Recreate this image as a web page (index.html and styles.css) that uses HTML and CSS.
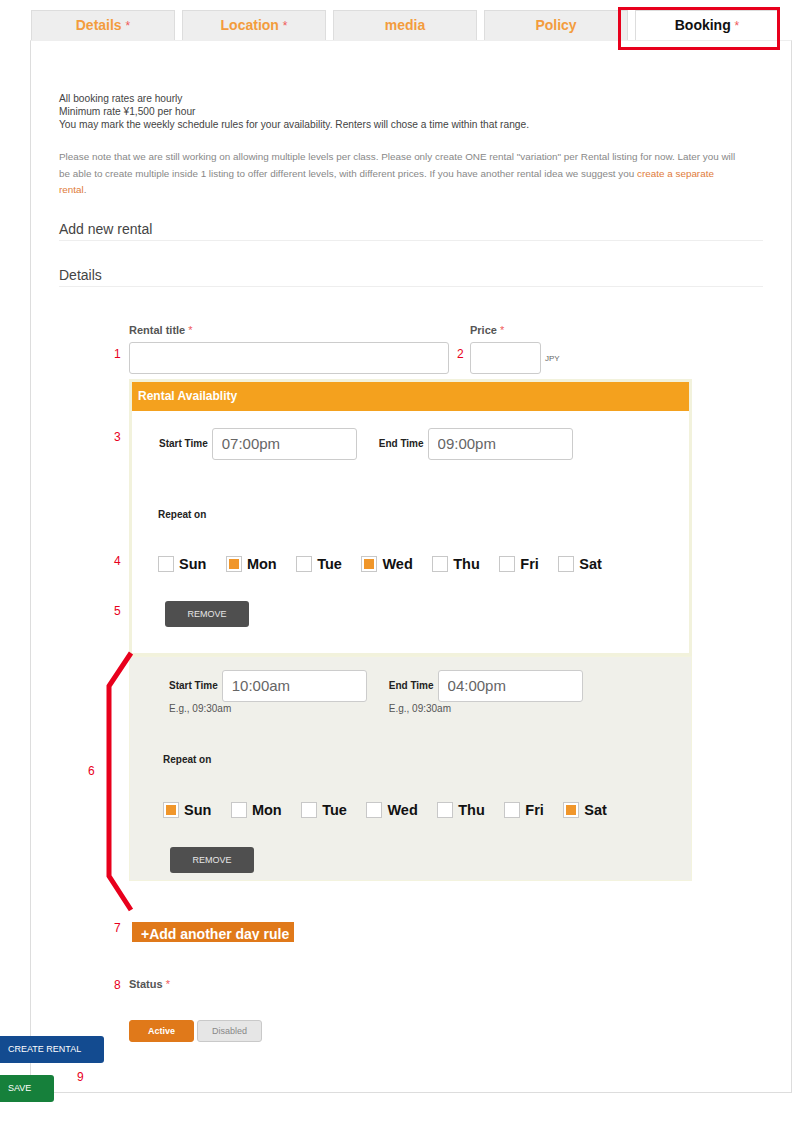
FILE: index.html
```html
<!DOCTYPE html>
<html lang="en">
<head>
    <meta charset="UTF-8">
    <meta name="viewport" content="width=device-width, initial-scale=1.0">
    <title>Booking - Add new rental</title>
    <link rel="stylesheet" href="styles.css">
</head>
<body>
<div class="page">
    <nav class="tabs">
        <a href="#" class="tab">Details <span class="req">*</span></a>
        <a href="#" class="tab">Location <span class="req">*</span></a>
        <a href="#" class="tab">media</a>
        <a href="#" class="tab">Policy</a>
        <a href="#" class="tab active">Booking <span class="req">*</span></a>
    </nav>

    <div class="panel">
        <div class="intro">
            All booking rates are hourly<br>
            Minimum rate ¥1,500 per hour<br>
            You may mark the weekly schedule rules for your availability. Renters will chose a time within that range.
        </div>
        <p class="note">Please note that we are still working on allowing multiple levels per class. Please only create ONE rental "variation" per Rental listing for now. Later you will be able to create multiple inside 1 listing to offer different levels, with different prices. If you have another rental idea we suggest you <a href="#">create a separate rental</a>.</p>

        <h3 class="section-title">Add new rental</h3>
        <h3 class="section-title section-details">Details</h3>

        <form class="rental-form">
            <div class="field-row">
                <div class="field field-title">
                    <label class="field-label">Rental title <span class="req">*</span></label>
                    <input type="text" class="text-input">
                </div>
                <div class="field field-price">
                    <label class="field-label">Price <span class="req">*</span></label>
                    <div class="price-line">
                        <input type="text" class="text-input price-input">
                        <span class="unit">JPY</span>
                    </div>
                </div>
            </div>

            <div class="availability">
                <div class="rule">
                    <div class="rule-head">Rental Availablity</div>
                    <div class="rule-body">
                        <div class="time-row">
                            <div class="time-group">
                                <div class="time-line">
                                    <span class="time-label">Start Time</span>
                                    <input type="text" class="time-input" value="07:00pm">
                                </div>
                            </div>
                            <div class="time-group">
                                <div class="time-line">
                                    <span class="time-label">End Time</span>
                                    <input type="text" class="time-input" value="09:00pm">
                                </div>
                            </div>
                        </div>
                        <div class="repeat-label">Repeat on</div>
                        <div class="days">
                            <label class="day"><span class="cb"></span>Sun</label>
                            <label class="day"><span class="cb on"></span>Mon</label>
                            <label class="day"><span class="cb"></span>Tue</label>
                            <label class="day"><span class="cb on"></span>Wed</label>
                            <label class="day"><span class="cb"></span>Thu</label>
                            <label class="day"><span class="cb"></span>Fri</label>
                            <label class="day"><span class="cb"></span>Sat</label>
                        </div>
                        <button type="button" class="btn-remove">REMOVE</button>
                    </div>
                </div>

                <div class="rule rule-alt">
                    <div class="rule-body">
                        <div class="time-row">
                            <div class="time-group">
                                <div class="time-line">
                                    <span class="time-label">Start Time</span>
                                    <input type="text" class="time-input" value="10:00am">
                                </div>
                                <div class="hint">E.g., 09:30am</div>
                            </div>
                            <div class="time-group">
                                <div class="time-line">
                                    <span class="time-label">End Time</span>
                                    <input type="text" class="time-input" value="04:00pm">
                                </div>
                                <div class="hint">E.g., 09:30am</div>
                            </div>
                        </div>
                        <div class="repeat-label">Repeat on</div>
                        <div class="days">
                            <label class="day"><span class="cb on"></span>Sun</label>
                            <label class="day"><span class="cb"></span>Mon</label>
                            <label class="day"><span class="cb"></span>Tue</label>
                            <label class="day"><span class="cb"></span>Wed</label>
                            <label class="day"><span class="cb"></span>Thu</label>
                            <label class="day"><span class="cb"></span>Fri</label>
                            <label class="day"><span class="cb on"></span>Sat</label>
                        </div>
                        <button type="button" class="btn-remove">REMOVE</button>
                    </div>
                </div>
            </div>

            <button type="button" class="btn-add"><span>+Add another day rule</span></button>

            <div class="field-label status-label">Status <span class="req">*</span></div>
            <div class="status-toggle">
                <button type="button" class="toggle active">Active</button>
                <button type="button" class="toggle">Disabled</button>
            </div>
        </form>
    </div>

    <div class="actions">
        <button type="button" class="btn btn-create">CREATE RENTAL</button>
        <button type="button" class="btn btn-save">SAVE</button>
    </div>

    <!-- review annotations -->
    <div class="highlight"></div>
    <svg class="bracket" width="40" height="280" viewBox="0 0 40 280">
        <polyline points="31,8 9,41 9,231 31,265" fill="none" stroke="#e8001c" stroke-width="5"/>
    </svg>
    <span class="mark mark-1">1</span>
    <span class="mark mark-2">2</span>
    <span class="mark mark-3">3</span>
    <span class="mark mark-4">4</span>
    <span class="mark mark-5">5</span>
    <span class="mark mark-6">6</span>
    <span class="mark mark-7">7</span>
    <span class="mark mark-8">8</span>
    <span class="mark mark-9">9</span>
</div>
</body>
</html>
```

FILE: styles.css
```css
:root {
    --orange: #f4a11e;
    --orange-dark: #e0791a;
    --tab-text: #f39c3d;
    --req: #f05a5a;
    --text: #444;
    --muted: #888;
    --border: #dddddd;
    --mark: #e8001c;
}

* {
    box-sizing: border-box;
}

body {
    margin: 0;
    font-family: 'Liberation Sans', Arial, sans-serif;
    color: var(--text);
    background: #fff;
}

.page {
    position: relative;
    padding-top: 10px;
}

/* tabs */
.tabs {
    display: flex;
    gap: 7px;
    margin-left: 31px;
    height: 30px;
}

.tab {
    width: 144px;
    height: 30px;
    background: #eeeeee;
    border: 1px solid var(--border);
    border-bottom: none;
    color: var(--tab-text);
    font-size: 14px;
    font-weight: bold;
    line-height: 29px;
    text-align: center;
    text-decoration: none;
}

.tab.active {
    background: #fff;
    color: #111;
}

.req {
    color: var(--req);
    font-weight: normal;
}

.tab .req {
    font-size: 12px;
}

/* panel */
.panel {
    width: 762px;
    margin-left: 30px;
    border: 1px solid var(--border);
    border-top-color: #eee;
    padding: 51px 28px 50px;
}

.intro {
    font-size: 10.2px;
    line-height: 13px;
    color: #444;
}

.note {
    max-width: 680px;
    margin: 18px 0 0;
    font-size: 9.9px;
    line-height: 16.5px;
    color: var(--muted);
}

.note a {
    color: #e07b3a;
    text-decoration: none;
}

.section-title {
    margin: 21px 0 0;
    padding-bottom: 2px;
    font-size: 14px;
    font-weight: normal;
    line-height: 18px;
    color: #444;
    border-bottom: 1px solid #eee;
}

.section-details {
    margin-top: 25px;
}

/* form */
.rental-form {
    margin: 37px 0 0 70px;
}

.field-row {
    display: flex;
    gap: 21px;
}

.field-label {
    display: block;
    margin-bottom: 5px;
    font-size: 11px;
    font-weight: bold;
    line-height: 13px;
    color: #555;
}

.text-input {
    display: block;
    height: 32px;
    border: 1px solid #ccc;
    border-radius: 3px;
    background: #fff;
    font-family: inherit;
}

.field-title .text-input {
    width: 320px;
}

.price-line {
    display: flex;
    align-items: center;
    gap: 4px;
}

.price-input {
    width: 71px;
}

.unit {
    font-size: 8px;
    color: #666;
    padding-top: 2px;
}

/* availability rules */
.availability {
    width: 563px;
    margin-top: 5px;
}

.rule {
    border: 3px solid #f2f2dc;
    background: #fff;
}

.rule-head {
    height: 29px;
    padding-left: 6px;
    background: var(--orange);
    color: #fff;
    font-size: 12px;
    font-weight: bold;
    line-height: 28px;
}

.rule-body {
    padding: 17px 0 26px 26px;
}

.rule-alt {
    border: 1px solid #f3f3de;
    background: #f0f0ea;
}

.rule-alt .rule-body {
    padding: 13px 0 7px 33px;
}

.time-row {
    display: flex;
    align-items: flex-start;
    gap: 22px;
    margin-left: 1px;
}

.rule-alt .time-row {
    margin-left: 6px;
}

.time-line {
    display: flex;
    align-items: center;
}

.time-label {
    margin-right: 4px;
    font-size: 10px;
    font-weight: bold;
    color: #222;
}

.time-input {
    width: 145px;
    height: 32px;
    padding: 0 9px;
    border: 1px solid #ccc;
    border-radius: 3px;
    background: #fff;
    font-family: inherit;
    font-size: 15px;
    color: #666;
}

.hint {
    font-size: 10px;
    line-height: 13px;
    color: #555;
}

.repeat-label {
    margin-top: 48px;
    font-size: 10px;
    font-weight: bold;
    line-height: 13px;
    color: #222;
}

.rule-alt .repeat-label {
    margin-top: 38px;
}

.days {
    display: flex;
    gap: 19.5px;
    height: 16px;
    margin-top: 35px;
}

.rule-alt .days {
    margin-top: 36px;
}

.day {
    display: flex;
    align-items: center;
    gap: 5px;
    font-size: 14.5px;
    font-weight: bold;
    color: #111;
}

.cb {
    position: relative;
    width: 16px;
    height: 16px;
    border: 1px solid #c8c8c8;
    background: #fff;
}

.cb.on::after {
    content: '';
    position: absolute;
    top: 2px;
    left: 2px;
    width: 10px;
    height: 10px;
    background: #f0962a;
}

.btn-remove {
    display: block;
    width: 84px;
    height: 26px;
    margin: 29px 0 0 7px;
    border: none;
    border-radius: 3px;
    background: #4f4f4f;
    color: #e6e6e6;
    font-family: inherit;
    font-size: 9px;
}

.btn-add {
    display: block;
    width: 162px;
    height: 20px;
    margin: 41px 0 0 3px;
    padding: 4px 0 0 9px;
    border: none;
    background: var(--orange-dark);
    color: #fff;
    font-family: inherit;
    font-size: 14px;
    font-weight: bold;
    text-align: left;
}

.btn-add span {
    display: block;
    height: 13px;
    overflow: hidden;
    line-height: 14px;
}

.status-label {
    margin: 36px 0 0;
}

.status-toggle {
    display: flex;
    gap: 3px;
    margin-top: 29px;
}

.toggle {
    width: 65px;
    height: 22px;
    border: 1px solid #c9c9c9;
    border-radius: 3px;
    background: #e6e6e6;
    color: #888;
    font-family: inherit;
    font-size: 9px;
}

.toggle.active {
    border-color: var(--orange-dark);
    background: var(--orange-dark);
    color: #fff;
    font-weight: bold;
}

/* page actions */
.actions {
    display: flex;
    flex-direction: column;
    align-items: flex-start;
    gap: 12px;
    margin-top: -57px;
}

.btn {
    height: 27px;
    padding: 0 8px;
    border: none;
    border-radius: 0 3px 3px 0;
    color: #fff;
    font-family: inherit;
    font-size: 9px;
    text-align: left;
}

.btn-create {
    width: 104px;
    background: #134b90;
}

.btn-save {
    width: 54px;
    background: #16803b;
}

/* annotations */
.highlight {
    position: absolute;
    left: 618px;
    top: 7px;
    width: 162px;
    height: 43px;
    border: 3px solid var(--mark);
}

.bracket {
    position: absolute;
    left: 100px;
    top: 645px;
}

.mark {
    position: absolute;
    color: var(--mark);
    font-size: 12px;
    line-height: 14px;
}

.mark-1 { left: 114px; top: 347px; }
.mark-2 { left: 457px; top: 347px; }
.mark-3 { left: 114px; top: 430px; }
.mark-4 { left: 114px; top: 554px; }
.mark-5 { left: 114px; top: 604px; }
.mark-6 { left: 88px; top: 764px; }
.mark-7 { left: 114px; top: 921px; }
.mark-8 { left: 114px; top: 978px; }
.mark-9 { left: 77px; top: 1070px; }
```
